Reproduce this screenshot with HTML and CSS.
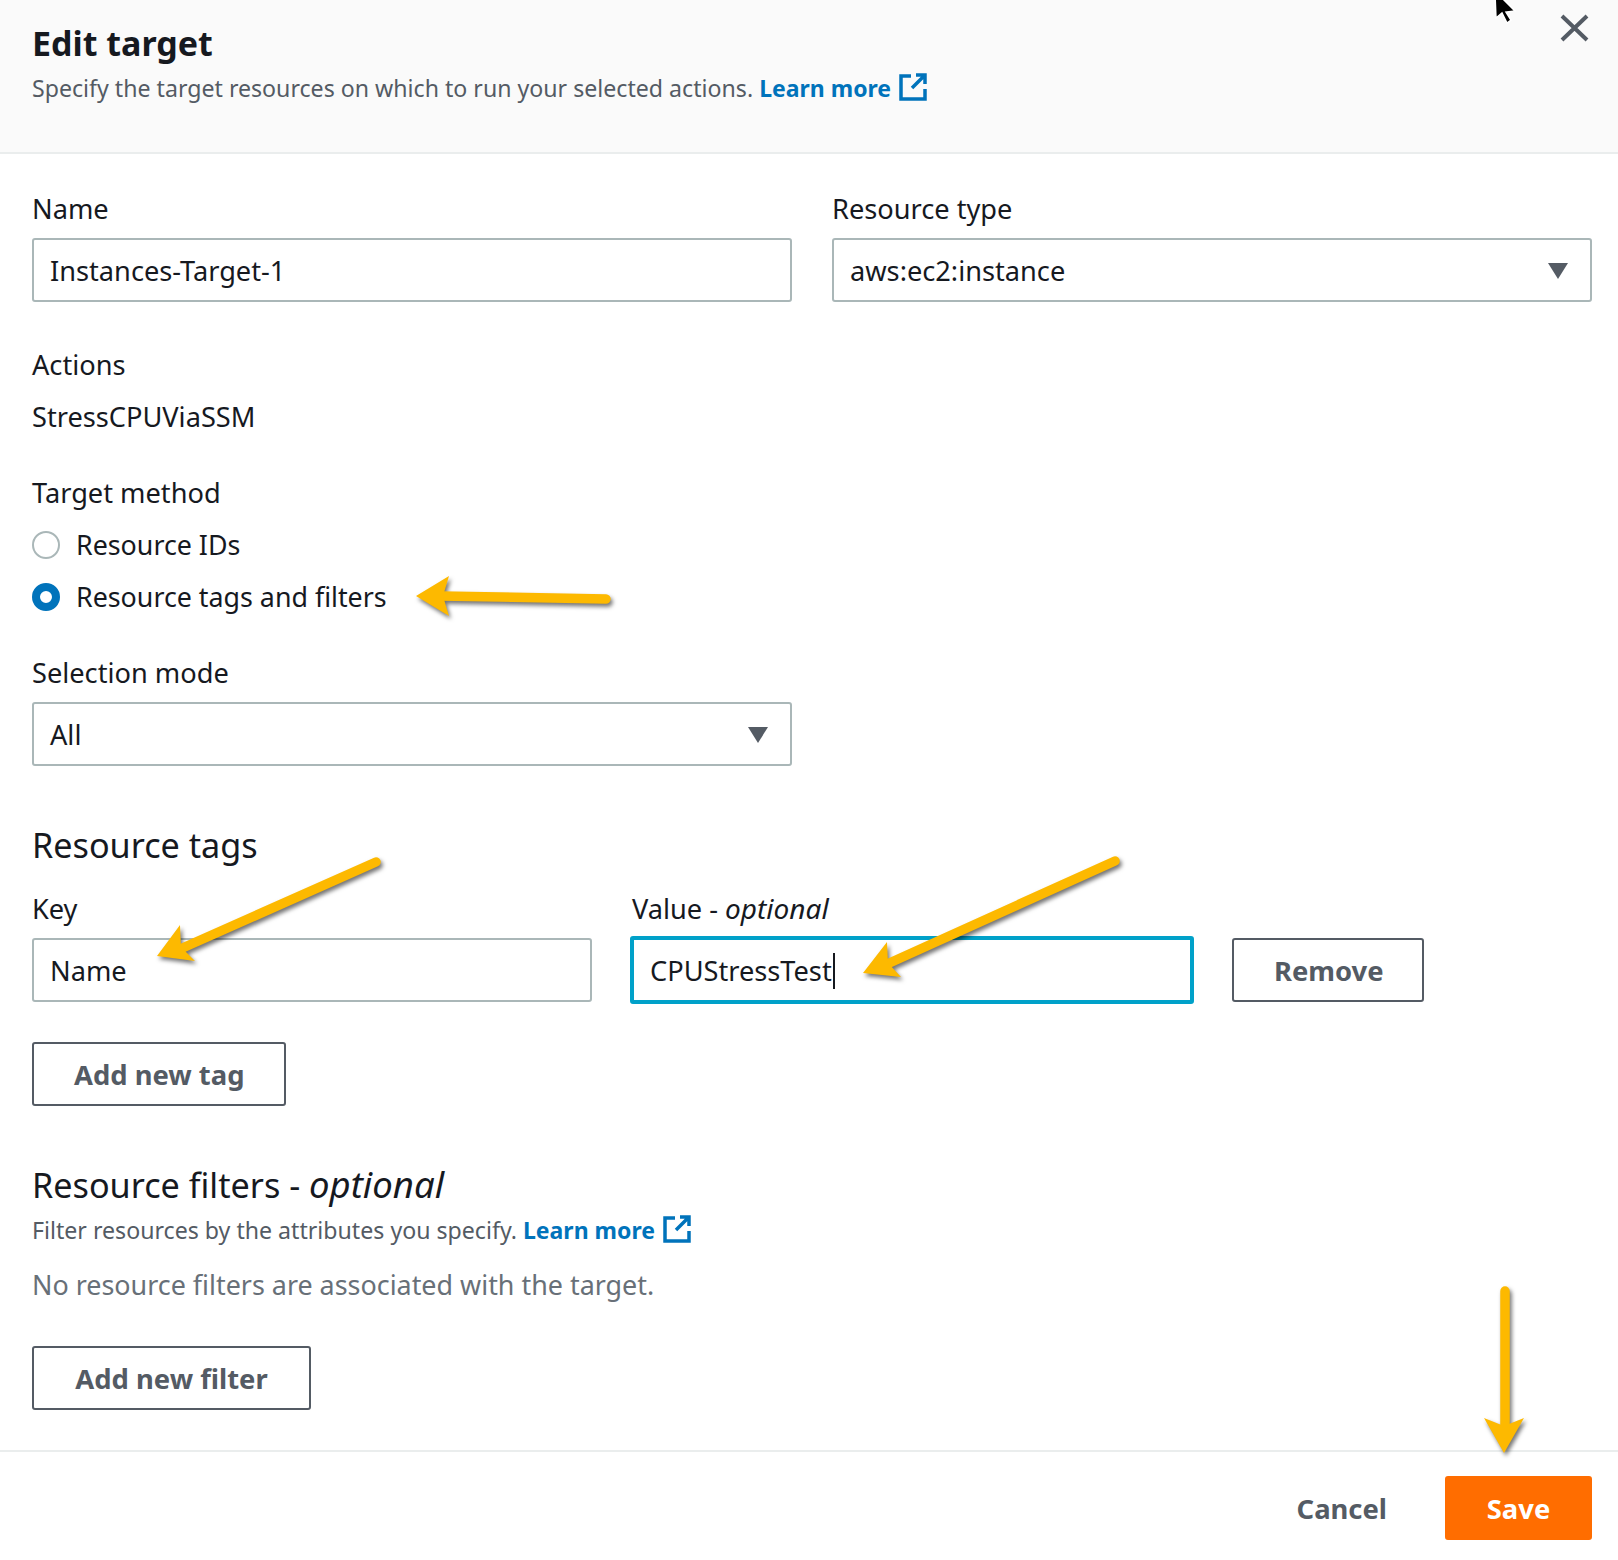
FILE: index.html
```html
<!DOCTYPE html>
<html lang="en">
<head>
    <meta charset="UTF-8">
    <meta name="viewport" content="width=device-width, initial-scale=1.0">
    <title>Edit target</title>
    <link rel="stylesheet" href="styles.css">
</head>
<body>
    <header class="modal-header">
        <h1 class="modal-title">Edit target</h1>
        <p class="modal-desc">Specify the target resources on which to run your selected actions. <a class="link" href="#">Learn more<svg class="ext-icon" viewBox="0 0 28 28"><path d="M12 3H2v23h24V16M17 2h9v9M26 2L13 15" /></svg></a></p>
    </header>

    <main class="modal-body">
        <div class="two-col">
            <div>
                <div class="label">Name</div>
                <div class="input">Instances-Target-1</div>
            </div>
            <div>
                <div class="label">Resource type</div>
                <div class="input select">aws:ec2:instance<span class="caret"></span></div>
            </div>
        </div>

        <div class="label actions-label">Actions</div>
        <div class="value">StressCPUViaSSM</div>

        <div class="label method-label">Target method</div>
        <div class="radio-row"><span class="radio"></span>Resource IDs</div>
        <div class="radio-row"><span class="radio checked"></span>Resource tags and filters</div>

        <div class="label mode-label">Selection mode</div>
        <div class="half">
            <div class="input select">All<span class="caret"></span></div>
        </div>

        <h2 class="section-title tags-title">Resource tags</h2>
        <div class="tag-row">
            <div class="tag-key">
                <div class="label">Key</div>
                <div class="input">Name</div>
            </div>
            <div class="tag-value">
                <div class="label value-label">Value - <i>optional</i></div>
                <div class="input focused">CPUStressTest<span class="text-cursor"></span></div>
            </div>
            <button class="btn btn-remove">Remove</button>
        </div>
        <button class="btn btn-add-tag">Add new tag</button>

        <h2 class="section-title filters-title">Resource filters - <i>optional</i></h2>
        <p class="filter-desc">Filter resources by the attributes you specify. <a class="link" href="#">Learn more<svg class="ext-icon" viewBox="0 0 28 28"><path d="M12 3H2v23h24V16M17 2h9v9M26 2L13 15" /></svg></a></p>
        <p class="filter-empty">No resource filters are associated with the target.</p>
        <button class="btn btn-add-filter">Add new filter</button>
    </main>

    <footer class="modal-footer">
        <button class="btn btn-link">Cancel</button>
        <button class="btn btn-primary">Save</button>
    </footer>

    <!-- screenshot annotations, drawn over the page -->
    <svg class="marks" viewBox="0 0 1618 1560">
        <path class="close-x" d="M1562 16L1587 40M1587 16L1562 40" />
        <path class="pointer" d="M1495 -6L1496 18L1502 13L1507 23L1511 20L1506 12L1515 11L1498 -6Z" />
        <g class="arrow">
            <path class="shaft" d="M440 596L606 599" />
            <path class="head" d="M416 596L449 576L443 596L449 616Z" />
            <path class="shaft" d="M376 862L178 950" />
            <path class="head" d="M157 956L180 925L181 947L195 961Z" />
            <path class="shaft" d="M1115 861L885 965" />
            <path class="head" d="M863 973L887 942L888 963L901 977Z" />
            <path class="shaft" d="M1505 1291V1425" />
            <path class="head" d="M1504 1453L1484 1418L1504 1426L1524 1418Z" />
        </g>
    </svg>
</body>
</html>
```

FILE: styles.css
```css
* {
    box-sizing: border-box;
}
body {
    margin: 0;
    height: 1560px;
    position: relative;
    overflow: hidden;
    background: white;
    color: #16191f;
    font-family: "Noto Sans", Arial, sans-serif;
    font-size: 27.2px;
    line-height: 36px;
}
p, h1, h2 {
    margin: 0;
}
.modal-header {
    height: 154px;
    padding: 23px 32px 0;
    background: #fafafa;
    border-bottom: 2px solid #eaeded;
}
.modal-title {
    font-size: 34px;
    line-height: 40px;
    font-weight: 700;
}
.modal-desc {
    margin-top: 7px;
    color: #545b64;
    font-size: 23.15px;
}
.link {
    color: #0073bb;
    font-weight: 700;
    font-size: 23px;
    text-decoration: none;
}
.ext-icon {
    width: 28px;
    height: 28px;
    margin-left: 8px;
    vertical-align: -4px;
    fill: none;
    stroke: #0073bb;
    stroke-width: 3.5;
}
.modal-body {
    padding: 37px 26px 0 32px;
}
.two-col {
    display: grid;
    grid-template-columns: 760px 760px;
    gap: 40px;
}
.label {
    height: 47px;
}
.input {
    height: 64px;
    padding: 2px 16px 0;
    display: flex;
    align-items: center;
    background: white;
    border: 2px solid #aab7b8;
    border-radius: 3px;
}
.select {
    justify-content: space-between;
}
.caret {
    width: 0;
    height: 0;
    margin-right: 6px;
    border-left: 10px solid transparent;
    border-right: 10px solid transparent;
    border-top: 16px solid #545b64;
}
.half {
    width: 760px;
}
.actions-label {
    margin-top: 45px;
    height: 52px;
}
.value {
    height: 36px;
}
.method-label {
    margin-top: 40px;
    height: 44px;
}
.radio-row {
    height: 52px;
    display: flex;
    align-items: center;
    gap: 16px;
    font-size: 26.8px;
}
.radio {
    width: 28px;
    height: 28px;
    border: 2px solid #aab7b8;
    border-radius: 50%;
}
.radio.checked {
    border: 8px solid #0073bb;
}
.mode-label {
    margin-top: 32px;
    height: 47px;
}
.section-title {
    font-size: 34.2px;
    line-height: 44px;
    font-weight: 400;
}
.section-title i {
    font-size: 36.5px;
    line-height: 0;
}
.tags-title {
    margin-top: 57px;
}
.tag-row {
    margin-top: 24px;
    display: flex;
    align-items: flex-end;
}
.tag-key {
    width: 560px;
}
.tag-value {
    width: 564px;
    margin-left: 38px;
}
.value-label {
    padding-left: 2px;
}
.value-label i {
    font-size: 28px;
    line-height: 0;
}
.focused {
    height: 68px;
    margin-top: -2px;
    margin-bottom: -2px;
    padding-left: 16px;
    border: 4px solid #00a1c9;
}
.text-cursor {
    width: 2px;
    height: 36px;
    margin-left: 1px;
    background: #16191f;
}
.btn {
    height: 64px;
    padding: 0 40px;
    background: white;
    border: 2px solid #545b64;
    border-radius: 3px;
    color: #545b64;
    font: 700 27.4px "Noto Sans", Arial, sans-serif;
}
.btn-remove {
    width: 192px;
    margin-left: 38px;
}
.btn-add-tag {
    display: block;
    margin-top: 40px;
}
.filters-title {
    margin-top: 57px;
}
.filter-desc {
    margin-top: 5px;
    color: #545b64;
    font-size: 23.15px;
}
.filter-empty {
    margin-top: 19px;
    color: #687078;
    font-size: 26.9px;
}
.btn-add-filter {
    display: block;
    width: 279px;
    margin-top: 43px;
}
.modal-footer {
    position: absolute;
    left: 0;
    right: 0;
    bottom: 0;
    height: 110px;
    padding: 24px 26px 0 0;
    display: flex;
    justify-content: flex-end;
    gap: 16px;
    background: white;
    border-top: 2px solid #eaeded;
}
.btn-link {
    border-color: transparent;
}
.btn-primary {
    width: 147px;
    padding: 0;
    background: #ff6d00;
    border-color: #ff6d00;
    color: white;
}
.marks {
    position: absolute;
    left: 0;
    top: 0;
    width: 1618px;
    height: 1560px;
    pointer-events: none;
}
.close-x {
    fill: none;
    stroke: #545b64;
    stroke-width: 4;
}
.pointer {
    fill: black;
    stroke: white;
    stroke-width: 1.5;
}
.arrow {
    filter: drop-shadow(2px 3px 2px rgba(0, 0, 0, 0.55));
}
.shaft {
    fill: none;
    stroke: #fdb900;
    stroke-width: 9.5;
    stroke-linecap: round;
}
.head {
    fill: #fdb900;
}
```
